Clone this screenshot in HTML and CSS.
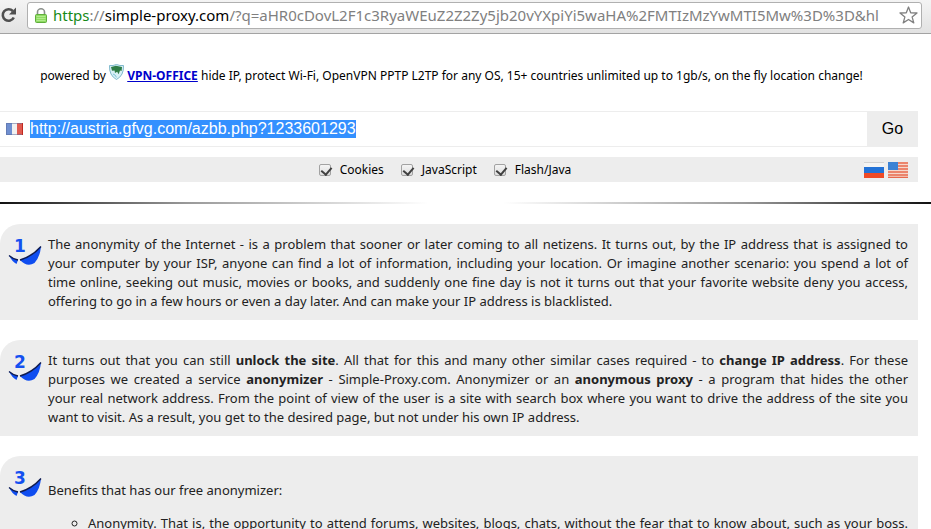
FILE: index.html
```html
<!DOCTYPE html>
<html lang="en">
<head>
  <meta charset="UTF-8" />
  <meta name="viewport" content="width=device-width, initial-scale=1.0" />
  <title>Simple-Proxy.com - free anonymizer</title>
  <link rel="stylesheet" href="styles.css">
</head>
<body>
  <div class="toolbar">
    <button class="reload" type="button" aria-label="Reload">
      <svg width="17" height="18" viewBox="0 0 17 18">
        <path d="M12.8 5A5.800 5.800 0 1 0 13.8 11.500" fill="none" stroke="#505050" stroke-width="2.6"/>
        <path d="M16 1.500v7H9z" fill="#505050"/>
      </svg>
    </button>
    <div class="address">
      <svg class="lock" width="12" height="15" viewBox="0 0 12 15">
        <path d="M2.5 7V4a3.5 3.2 0 0 1 7 0v3" fill="none" stroke="#8a8f8a" stroke-width="1.6"/>
        <rect x="0.5" y="6.5" width="11" height="8" rx="1" fill="#8fdb62" stroke="#5fae3c"/>
        <path d="M1.5 8.5h9M1.5 10.5h9M1.5 12.5h9" stroke="#b0ec8c"/>
      </svg>
      <div class="url"><span class="scheme">https</span>://<span class="host">simple-proxy.com</span>/?q=aHR0cDovL2F1c3RyaWEuZ2Z2Zy5jb20vYXpiYi5waHA%2FMTIzMzYwMTI5Mw%3D%3D&amp;hl</div>
      <button class="star" type="button" aria-label="Bookmark this page">
        <svg width="19" height="18" viewBox="0 0 19 18">
          <path d="M9.5 1l2.200 5.800 6.300.2-4.900 3.900 1.700 6-5.300-3.400-5.300 3.400 1.700-6L1 7l6.300-.2z" fill="#fff" stroke="#808080" stroke-width="1.3" stroke-linejoin="round"/>
        </svg>
      </button>
    </div>
  </div>

  <div class="powered">
    powered by
    <svg class="shield" width="15" height="16" viewBox="0 0 15 16">
      <path d="M.5 1.500Q4 2 7.500.5 11 2 14.500 1.500 15 11.500 7.500 15.500 0 11.500.5 1.500z" fill="#d8f0f6" stroke="#7fb9cc"/>
      <path d="M2 3l5-1.200L13 3l-.4 4-1.600-.6-1.400 3.800-1.400-2.400L6 9 5.600 6.400 3 6.800z" fill="#2f7d46"/>
      <path d="M4 10l2 1 1.500 2.400" fill="none" stroke="#7fc4d8"/>
    </svg>
    <a href="#vpn-office">VPN-OFFICE</a>
    hide IP, protect Wi-Fi, OpenVPN PPTP L2TP for any OS, 15+ countries unlimited up to 1gb/s, on the fly location change!
  </div>

  <form class="proxy" onsubmit="return false">
    <div class="query">
      <svg class="country" width="17" height="12" viewBox="0 0 17 12">
        <rect width="17" height="12" fill="#f1f1f1"/>
        <rect width="6" height="12" fill="#6f8fd0"/>
        <rect x="11" width="6" height="12" fill="#e05a50"/>
        <rect x=".5" y=".5" width="16" height="11" fill="none" stroke="#5a6a9a" stroke-opacity=".5"/>
        <path d="M16.500 0v12" stroke="#c02820"/>
      </svg>
      <input class="target" id="target" type="text" aria-label="Site address" value="http://austria.gfvg.com/azbb.php?1233601293" spellcheck="false" />
      <button class="go" type="submit">Go</button>
    </div>
    <div class="options">
      <div class="checks">
        <label><input type="checkbox" checked /> Cookies</label>
        <label><input type="checkbox" checked /> JavaScript</label>
        <label><input type="checkbox" checked /> Flash/Java</label>
      </div>
      <div class="langs">
        <a href="#ru" aria-label="Russian">
          <svg width="20" height="16" viewBox="0 0 20 16">
            <rect width="20" height="6" fill="#f4f4f4"/>
            <rect y="5" width="20" height="6" fill="#2372d6"/>
            <rect y="11" width="20" height="5" fill="#ee4a26"/>
            <path d="M0 .5h20" stroke="#d2d2d2"/>
          </svg>
        </a>
        <a href="#en" aria-label="English">
          <svg width="20" height="16" viewBox="0 0 20 16">
            <rect width="20" height="16" fill="#f6d8cc"/>
            <path d="M0 1h20M0 4h20M0 7h20M0 10h20M0 13h20M0 15.500h20" stroke="#e8694e" stroke-width="1.500"/>
            <rect width="10" height="8" fill="#3c82d4"/>
          </svg>
        </a>
      </div>
    </div>
  </form>

  <hr class="divider" />

  <svg class="defs" width="0" height="0" aria-hidden="true">
    <symbol id="wings" viewBox="0 0 34 32">
      <path d="M1 10.500q4 3.500 9 4.500L8.500 19Q4 16.500 1 10.500z" fill="#0f4df0"/>
      <path d="M1 10.500q4 3.500 9 4.500" fill="none" stroke="#101c50" stroke-width="1.300"/>
      <path d="M12 15Q24 11.500 33 1.500 32 12 26.500 18 19 22.500 12 15z" fill="#0f4df0"/>
      <path d="M12 15Q24 11.500 33 1.500" fill="none" stroke="#101c50" stroke-width="1.500"/>
    </symbol>
  </svg>

  <div class="panel">
    <svg class="badge" width="34" height="32">
      <text class="num" x="12" y="17">1</text>
      <use href="#wings" y="10" width="34" height="32"/>
    </svg>
    <div class="text">The anonymity of the Internet - is a problem that sooner or later coming to all netizens. It turns out, by the IP address that is assigned to your computer by your ISP, anyone can find a lot of information, including your location. Or imagine another scenario: you spend a lot of time online, seeking out music, movies or books, and suddenly one fine day is not it turns out that your favorite website deny you access, offering to go in a few hours or even a day later. And can make your IP address is blacklisted.</div>
  </div>

  <div class="panel">
    <svg class="badge" width="34" height="32">
      <text class="num" x="12" y="17">2</text>
      <use href="#wings" y="10" width="34" height="32"/>
    </svg>
    <div class="text">It turns out that you can still <b>unlock the site</b>. All that for this and many other similar cases required - to <b>change IP address</b>. For these purposes we created a service <b>anonymizer</b> - Simple-Proxy.com. Anonymizer or an <b>anonymous proxy</b> - a program that hides the other <span class="keep">your real</span> network address. From the point of view of the user is a site with search box where you want to drive the address of the site you <span class="keep">want to visit.</span> As a result, you get to the desired page, but not under his own IP address.</div>
  </div>

  <div class="panel">
    <svg class="badge" width="34" height="32">
      <text class="num" x="12" y="17">3</text>
      <use href="#wings" y="10" width="34" height="32"/>
    </svg>
    <div class="text">
      <p>Benefits that has our free anonymizer:</p>
      <ul>
        <li>Anonymity. That is, the opportunity to attend forums, websites, blogs, chats, without the fear that to know about, such as your boss.</li>
      </ul>
    </div>
  </div>

  <script>
    const target = document.getElementById('target');
    target.focus();
    target.select();
  </script>
</body>
</html>
```
FILE: styles.css
```css
* {
  box-sizing: border-box;
}

html {
  height: 100%;
  overflow: hidden;
}

body {
  margin: 0;
  background: #fff;
  color: #222;
  font-family: "Noto Sans", sans-serif;
  font-size: 13px;
  line-height: 19px;
}

button {
  padding: 0;
  border: none;
  background: none;
  cursor: pointer;
}

svg {
  display: block;
}

.defs {
  position: absolute;
}

/* browser bar */
.toolbar {
  display: flex;
  align-items: center;
  gap: 10px;
  height: 34px;
  padding: 0 9px 3px 0;
  background: linear-gradient(#f4f4f4, #e2e2e2);
  border-bottom: 1px solid #a3a3a3;
}

.address {
  flex: 1;
  display: flex;
  align-items: center;
  gap: 6px;
  min-width: 0;
  height: 27px;
  padding: 0 3px 0 7px;
  background: #fff;
  border: 1px solid #b0b0b0;
  border-radius: 3px;
}

.url {
  flex: 1;
  overflow: hidden;
  white-space: nowrap;
  font-size: 15px;
  line-height: 24px;
  color: #808080;
}

.scheme {
  color: #168a16;
}

.host {
  color: #000;
}

.powered {
  padding: 30px 28px 0 0;
  height: 77px;
  text-align: center;
  font-size: 12px;
  color: #000;
}

.powered a {
  font-weight: bold;
  color: #0000cc;
}

.shield {
  display: inline-block;
}

/* address form */
.proxy {
  margin-right: 13px;
}

.query {
  display: flex;
  align-items: center;
  height: 36px;
  padding-left: 6px;
  border-top: 1px solid #ededed;
  border-bottom: 1px solid #ededed;
}

.target {
  flex: 1;
  min-width: 0;
  height: 34px;
  padding: 0 7px;
  border: none;
  outline: none;
  background: none;
  font-family: "Liberation Sans", Arial, sans-serif;
  font-size: 16px;
  color: #000;
}

.target::selection {
  background: #3390ff;
  color: #fff;
}

.go {
  align-self: stretch;
  width: 51px;
  background: #ededed;
  font-family: "Liberation Sans", Arial, sans-serif;
  font-size: 16px;
  color: #000;
}

.options {
  display: flex;
  align-items: center;
  height: 25px;
  margin-top: 10px;
  padding-right: 10px;
  background: #ededed;
  font-size: 12px;
  color: #000;
}

.checks {
  flex: 1;
  display: flex;
  justify-content: center;
  gap: 17px;
  padding-left: 26px;
}

.checks label {
  display: flex;
  align-items: center;
  gap: 9px;
}

.checks input {
  appearance: none;
  width: 12px;
  height: 12px;
  margin: 0;
  border: 1px solid #a2a2a2;
  border-radius: 2px;
  background: linear-gradient(#f4f4f4, #dedede);
}

.checks input:checked::before {
  content: "";
  display: block;
  width: 5px;
  height: 8px;
  margin-left: 3px;
  border: solid #404040;
  border-width: 0 2px 2px 0;
  transform: rotate(40deg);
}

.langs {
  display: flex;
  gap: 4px;
}

.divider {
  height: 2px;
  margin: 20px 0;
  border: none;
  background: linear-gradient(to right, #111, #999 20%, #fff 46%, #fff 54%, #999 80%, #111);
}

/* numbered blocks */
.panel {
  display: flex;
  gap: 6px;
  margin: 0 13px 20px 0;
  padding: 11px 10px 9px 8px;
  background: #ededed;
  border-top-left-radius: 20px;
}

.badge {
  flex: none;
}

.num {
  font-family: "DejaVu Sans", Verdana, sans-serif;
  font-size: 17px;
  font-weight: bold;
  fill: #1450f0;
  text-anchor: middle;
}

.text {
  flex: 1;
  text-align: justify;
}

.text p,
.text ul {
  margin: 14px 0;
}

.text ul {
  padding-left: 40px;
  list-style: circle;
}

.text li {
  text-align-last: justify;
}

.keep {
  white-space: nowrap;
}
```
